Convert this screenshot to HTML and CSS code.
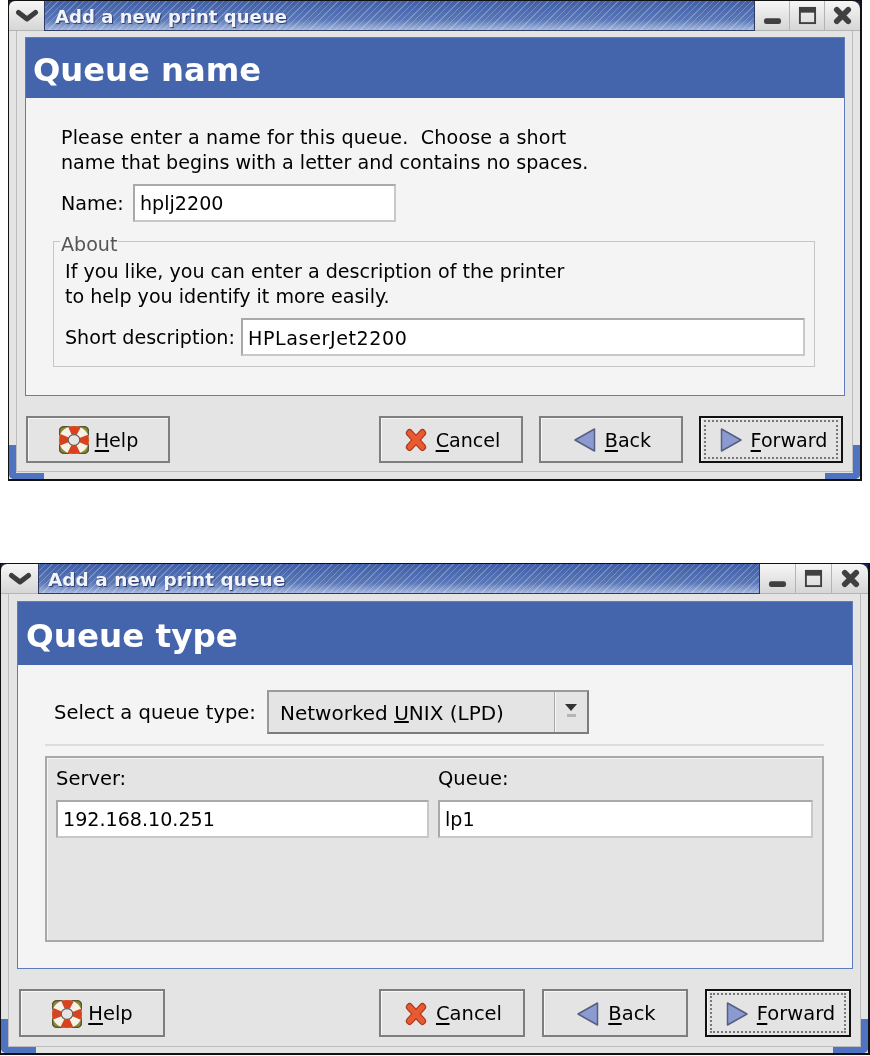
FILE: index.html
```html
<!DOCTYPE html>
<html lang="en">
<head>
<meta charset="utf-8">
<title>Add a new print queue</title>
<link rel="stylesheet" href="styles.css">
</head>
<body>
<svg class="defs" width="0" height="0" aria-hidden="true">
  <defs>
    <symbol id="i-help" viewBox="1 1 30 30" preserveAspectRatio="none">
      <rect x="1.5" y="1.5" width="29" height="29" rx="5" fill="#8f8a2e" stroke="#55553a" stroke-width="1.5"/>
      <circle cx="16" cy="16" r="10.5" fill="none" stroke="#f6f2e8" stroke-width="9"/>
      <circle cx="16" cy="16" r="10.5" fill="none" stroke="#d8431f" stroke-width="9" stroke-dasharray="9 7.5" stroke-dashoffset="4.5"/>
      <circle cx="16" cy="16" r="5.8" fill="#e4e4e4" stroke="#6a5a50" stroke-width="1.2"/>
    </symbol>
    <symbol id="i-cancel" viewBox="0 0 24 24" preserveAspectRatio="none">
      <path d="M5 5 19 19M19 5 5 19" fill="none" stroke="#a83a20" stroke-width="8" stroke-linecap="round"/>
      <path d="M5 5 19 19M19 5 5 19" fill="none" stroke="#ea5a30" stroke-width="5.4" stroke-linecap="round"/>
    </symbol>
    <symbol id="i-back" viewBox="0 0 22 24">
      <path d="M20.5 1v22L1 12z" fill="#8c9ad2" stroke="#565f80" stroke-width="1.5" stroke-linejoin="round"/>
    </symbol>
    <symbol id="i-forward" viewBox="0 0 22 24">
      <path d="M1.5 1v22L21 12z" fill="#8c9ad2" stroke="#565f80" stroke-width="1.5" stroke-linejoin="round"/>
    </symbol>
    <symbol id="i-menu" viewBox="0 0 24 14">
      <path d="M3.5 3.5 12 10 20.5 3.5" fill="none" stroke="#3c3c3c" stroke-width="5" stroke-linecap="round" stroke-linejoin="round"/>
    </symbol>
    <symbol id="i-min" viewBox="0 0 20 20">
      <rect x="1" y="13" width="18" height="6" rx="2.5" fill="#404040"/>
    </symbol>
    <symbol id="i-max" viewBox="0 0 20 20">
      <rect x="2" y="2" width="16" height="16" fill="none" stroke="#404040" stroke-width="2"/>
      <rect x="2" y="2" width="16" height="5" fill="#404040"/>
    </symbol>
    <symbol id="i-close" viewBox="0 0 20 20">
      <path d="M4 4 16 16M16 4 4 16" stroke="#404040" stroke-width="6" stroke-linecap="round"/>
    </symbol>
  </defs>
</svg>

<section class="window window-a">
  <header class="titlebar">
    <span class="tb-btn tb-menu"><svg class="ic-menu"><use href="#i-menu"/></svg></span>
    <span class="tb-title">Add a new print queue</span>
    <span class="tb-btn"><svg class="ic-tb"><use href="#i-min"/></svg></span>
    <span class="tb-btn"><svg class="ic-tb"><use href="#i-max"/></svg></span>
    <span class="tb-btn tb-last"><svg class="ic-tb"><use href="#i-close"/></svg></span>
  </header>
  <div class="client">
    <main class="panel">
      <h1 class="panel-head">Queue name</h1>
      <div class="panel-body">
        <p class="para"><span class="line-wide">Please enter a name for this queue.&nbsp; Choose a short</span><br>name that begins with a letter and contains no spaces.</p>
        <div class="row row-name">
          <span class="label label-name">Name:</span>
          <span class="entry entry-name">hplj2200</span>
        </div>
        <div class="group">
          <span class="group-title">About</span>
          <p class="para">If you like, you can enter a description of the printer<br>to help you identify it more easily.</p>
          <div class="row row-desc">
            <span class="label label-desc">Short description:</span>
            <span class="entry entry-desc">HPLaserJet2200</span>
          </div>
        </div>
      </div>
    </main>
    <footer class="actions">
      <button class="btn btn-help"><svg class="ic-help"><use href="#i-help"/></svg><span><u>H</u>elp</span></button>
      <span class="spacer"></span>
      <button class="btn"><svg class="ic-btn"><use href="#i-cancel"/></svg><span><u>C</u>ancel</span></button>
      <button class="btn"><svg class="ic-btn"><use href="#i-back"/></svg><span><u>B</u>ack</span></button>
      <button class="btn btn-default"><span class="focus"><svg class="ic-btn"><use href="#i-forward"/></svg><span><u>F</u>orward</span></span></button>
    </footer>
  </div>
  <span class="corner corner-l"></span>
  <span class="corner corner-r"></span>
</section>

<section class="window window-b">
  <header class="titlebar">
    <span class="tb-btn tb-menu"><svg class="ic-menu"><use href="#i-menu"/></svg></span>
    <span class="tb-title">Add a new print queue</span>
    <span class="tb-btn"><svg class="ic-tb"><use href="#i-min"/></svg></span>
    <span class="tb-btn"><svg class="ic-tb"><use href="#i-max"/></svg></span>
    <span class="tb-btn tb-last"><svg class="ic-tb"><use href="#i-close"/></svg></span>
  </header>
  <div class="client">
    <main class="panel">
      <h1 class="panel-head">Queue type</h1>
      <div class="panel-body">
        <div class="row row-type">
          <span class="label label-type">Select a queue type:</span>
          <span class="combo">
            <span class="combo-text">Networked <u>U</u>NIX (LPD)</span>
            <span class="combo-arrow"><span class="arrow-head"></span><span class="arrow-bar"></span></span>
          </span>
        </div>
        <hr class="sep">
        <div class="frame">
          <div class="field field-server">
            <span class="label">Server:</span>
            <span class="entry">192.168.10.251</span>
          </div>
          <div class="field field-queue">
            <span class="label">Queue:</span>
            <span class="entry">lp1</span>
          </div>
        </div>
      </div>
    </main>
    <footer class="actions">
      <button class="btn btn-help"><svg class="ic-help"><use href="#i-help"/></svg><span><u>H</u>elp</span></button>
      <span class="spacer"></span>
      <button class="btn"><svg class="ic-btn"><use href="#i-cancel"/></svg><span><u>C</u>ancel</span></button>
      <button class="btn"><svg class="ic-btn"><use href="#i-back"/></svg><span><u>B</u>ack</span></button>
      <button class="btn btn-default"><span class="focus"><svg class="ic-btn"><use href="#i-forward"/></svg><span><u>F</u>orward</span></span></button>
    </footer>
  </div>
  <span class="corner corner-l"></span>
  <span class="corner corner-r"></span>
</section>
</body>
</html>
```

FILE: styles.css
```css
* { box-sizing: border-box; }
html, body { margin: 0; padding: 0; background: #fff; }
body {
  width: 870px;
  height: 1056px;
  overflow: hidden;
  font-family: "DejaVu Sans", sans-serif;
  color: #000;
}
.defs { position: absolute; }

.window {
  position: relative;
  background: #e4e4e4;
  border: 1px solid #111;
  border-width: 1px 2px 2px 1px;
  display: flex;
  flex-direction: column;
  overflow: hidden;
  filter: blur(0.4px);
}
.window-a { width: 854px; height: 481px; margin-left: 8px; font-size: 19.1px; }
.window-b { width: 870px; height: 492px; margin-top: 82px; font-size: 19.5px; }
.window::before, .window::after {
  content: "";
  position: absolute;
  top: 0;
  width: 9px;
  height: 9px;
  background: #14265c;
}
.window::before { left: 0; }
.window::after { right: 0; }

/* Title bar */
.titlebar { position: relative; z-index: 1; display: flex; height: 30px; flex: none; }
.tb-btn {
  width: 35px;
  flex: none;
  display: flex;
  align-items: center;
  justify-content: center;
  background: linear-gradient(#f6f6f6, #d6d6d6);
  border-right: 1px solid #b4b4b4;
  border-bottom: 1px solid #b4b4b4;
}
.window-b .tb-btn { width: 36px; }
.window-b .tb-menu { width: 37px; }
.tb-menu { border-right: none; border-top-left-radius: 6px; }
.tb-last { border-right: none; border-top-right-radius: 8px; }
.tb-title {
  flex: 1;
  padding-left: 10px;
  font-weight: bold;
  font-size: 18.1px;
  line-height: 32px;
  color: #f2f4fa;
  text-shadow: 1px 1px 1px #27396a;
  border: 1px solid #2e3c64;
  border-width: 0 1px 1px 1px;
  background:
    repeating-linear-gradient(135deg, rgba(255,255,255,.24) 0 1px, rgba(255,255,255,0) 1px 4.5px),
    linear-gradient(#3f5ea6 0%, #5a78b8 65%, #a3b5da 100%);
}
.window-b .tb-title { font-size: 18.5px; padding-left: 9px; }
.ic-menu { width: 24px; height: 14px; }
.ic-tb { width: 19px; height: 19px; }

/* Client area */
.client {
  flex: 1;
  display: flex;
  flex-direction: column;
  margin: 0 7px 7px;
  border: 1px solid #bcbcbc;
  border-top: none;
  padding: 6px 7px 0 8px;
}
.window-b .client { padding-top: 7px; margin-bottom: 6px; }

.panel {
  border: 1px solid #5f7dbe;
  background: #f4f4f4;
  display: flex;
  flex-direction: column;
  flex: none;
}
.window-a .panel { height: 359px; }
.window-b .panel { height: 368px; }

.panel-head {
  margin: 0;
  background: #4464ac;
  color: #fff;
  font-size: 32.2px;
  font-weight: bold;
  height: 60px;
  line-height: 64px;
  padding-left: 7px;
}
.window-b .panel-head { height: 63px; line-height: 68px; padding-left: 8px; font-size: 32.6px; }

.panel-body { flex: 1; display: flex; flex-direction: column; }
.window-a .panel-body { padding: 27px 29px 0 27px; }
.window-b .panel-body { padding: 25px 0 0 27px; }

.para { margin: 0; line-height: 25px; white-space: nowrap; }
.window-a .para { padding-left: 8px; }
.line-wide { letter-spacing: 0.15px; }

.row { display: flex; align-items: center; }
.label { white-space: nowrap; flex: none; }
.label-name { width: 72px; }
.label-desc { width: 176px; padding-top: 1px; }
.label-type { width: 213px; }

.entry {
  display: block;
  background: #fff;
  border: 2px solid #a9a9a9;
  border-right-color: #c8c8c8;
  border-bottom-color: #c8c8c8;
  padding-left: 5px;
  white-space: nowrap;
}

.row-name { margin-top: 9px; padding-left: 8px; }
.entry-name { width: 263px; height: 38px; line-height: 35px; }

.group {
  position: relative;
  margin-top: 19px;
  height: 126px;
  border: 1px solid #c6c6c6;
  padding: 17px 9px 0 11px;
}
.group .para { padding-left: 0; }
.group-title {
  position: absolute;
  top: -7px;
  left: 6px;
  padding: 0 1px;
  background: #f4f4f4;
  color: #555;
  line-height: 20px;
}
.row-desc { margin-top: 9px; }
.entry-desc { flex: 1; height: 38px; line-height: 37px; letter-spacing: 0.6px; }

/* Queue type */
.row-type { height: 44px; padding-left: 9px; }
.combo {
  width: 322px;
  height: 44px;
  display: flex;
  background: #e4e4e4;
  border: 2px solid #7c7c7c;
  border-top-color: #9a9a9a;
  border-left-color: #9a9a9a;
  font-size: 20px;
}
.combo-text { flex: 1; padding-left: 11px; line-height: 43px; white-space: nowrap; }
.combo-arrow {
  width: 33px;
  flex: none;
  border-left: 1px solid #a8a8a8;
  box-shadow: inset 1px 0 0 #f6f6f6;
  display: flex;
  flex-direction: column;
  align-items: center;
  padding-top: 12px;
}
.arrow-head {
  width: 0;
  height: 0;
  border-left: 6px solid transparent;
  border-right: 6px solid transparent;
  border-top: 7px solid #333;
}
.arrow-bar { width: 9px; height: 3px; margin-top: 3px; background: #b5b5b5; }

.sep { width: 779px; height: 2px; border: 0; margin: 10px 0 10px; background: #dcdcdc; }

.frame {
  width: 779px;
  height: 186px;
  background: #e4e4e4;
  border: 2px solid #a8a8a8;
  box-shadow: inset 1px 1px 0 #f4f4f4;
  display: flex;
  gap: 9px;
  padding: 9px 9px 0;
}
.field { display: flex; flex-direction: column; gap: 9px; }
.field .label { line-height: 24px; }
.field .entry { height: 38px; line-height: 36px; font-size: 19.1px; }
.field-server { width: 373px; }
.field-queue { width: 375px; }

/* Action buttons */
.actions { display: flex; align-items: flex-start; gap: 16px; }
.window-a .actions { margin-top: 20px; padding: 0 2px 0 1px; }
.window-b .actions { margin-top: 20px; padding: 0 2px; gap: 17px; }
.spacer { flex: 1; }
.btn {
  flex: none;
  width: 144px;
  height: 47px;
  padding: 1px 0 0 3px;
  display: flex;
  align-items: center;
  justify-content: center;
  gap: 9px;
  font: inherit;
  color: #000;
  background: #e4e4e4;
  border: 2px solid #7e7e7e;
  box-shadow: inset 1px 1px 0 #f6f6f6;
}
.btn-help { padding-left: 1px; gap: 6px; }
.window-b .btn { width: 146px; height: 48px; }
.btn u { text-underline-offset: 3px; text-decoration-thickness: 1.5px; }
.btn-default { border-color: #111; padding: 0; }
.focus {
  flex: 1;
  align-self: stretch;
  margin: 2px 3px;
  padding: 1px 0 0 5px;
  border: 2px dotted #777;
  display: flex;
  align-items: center;
  justify-content: center;
  gap: 9px;
}
.ic-help { width: 30px; height: 28px; }
.ic-btn { width: 22px; height: 24px; }

.corner {
  position: absolute;
  bottom: 0;
  width: 7px;
  height: 34px;
  background: #4f73c0;
}
.corner-l { left: 0; border-bottom-left-radius: 5px; }
.corner-r { right: 0; border-bottom-right-radius: 5px; }
.corner::after {
  content: "";
  position: absolute;
  bottom: 0;
  width: 35px;
  height: 6px;
  background: #4f73c0;
}
.corner-l::after { left: 0; border-bottom-left-radius: 5px; }
.corner-r::after { right: 0; border-bottom-right-radius: 5px; }
```
